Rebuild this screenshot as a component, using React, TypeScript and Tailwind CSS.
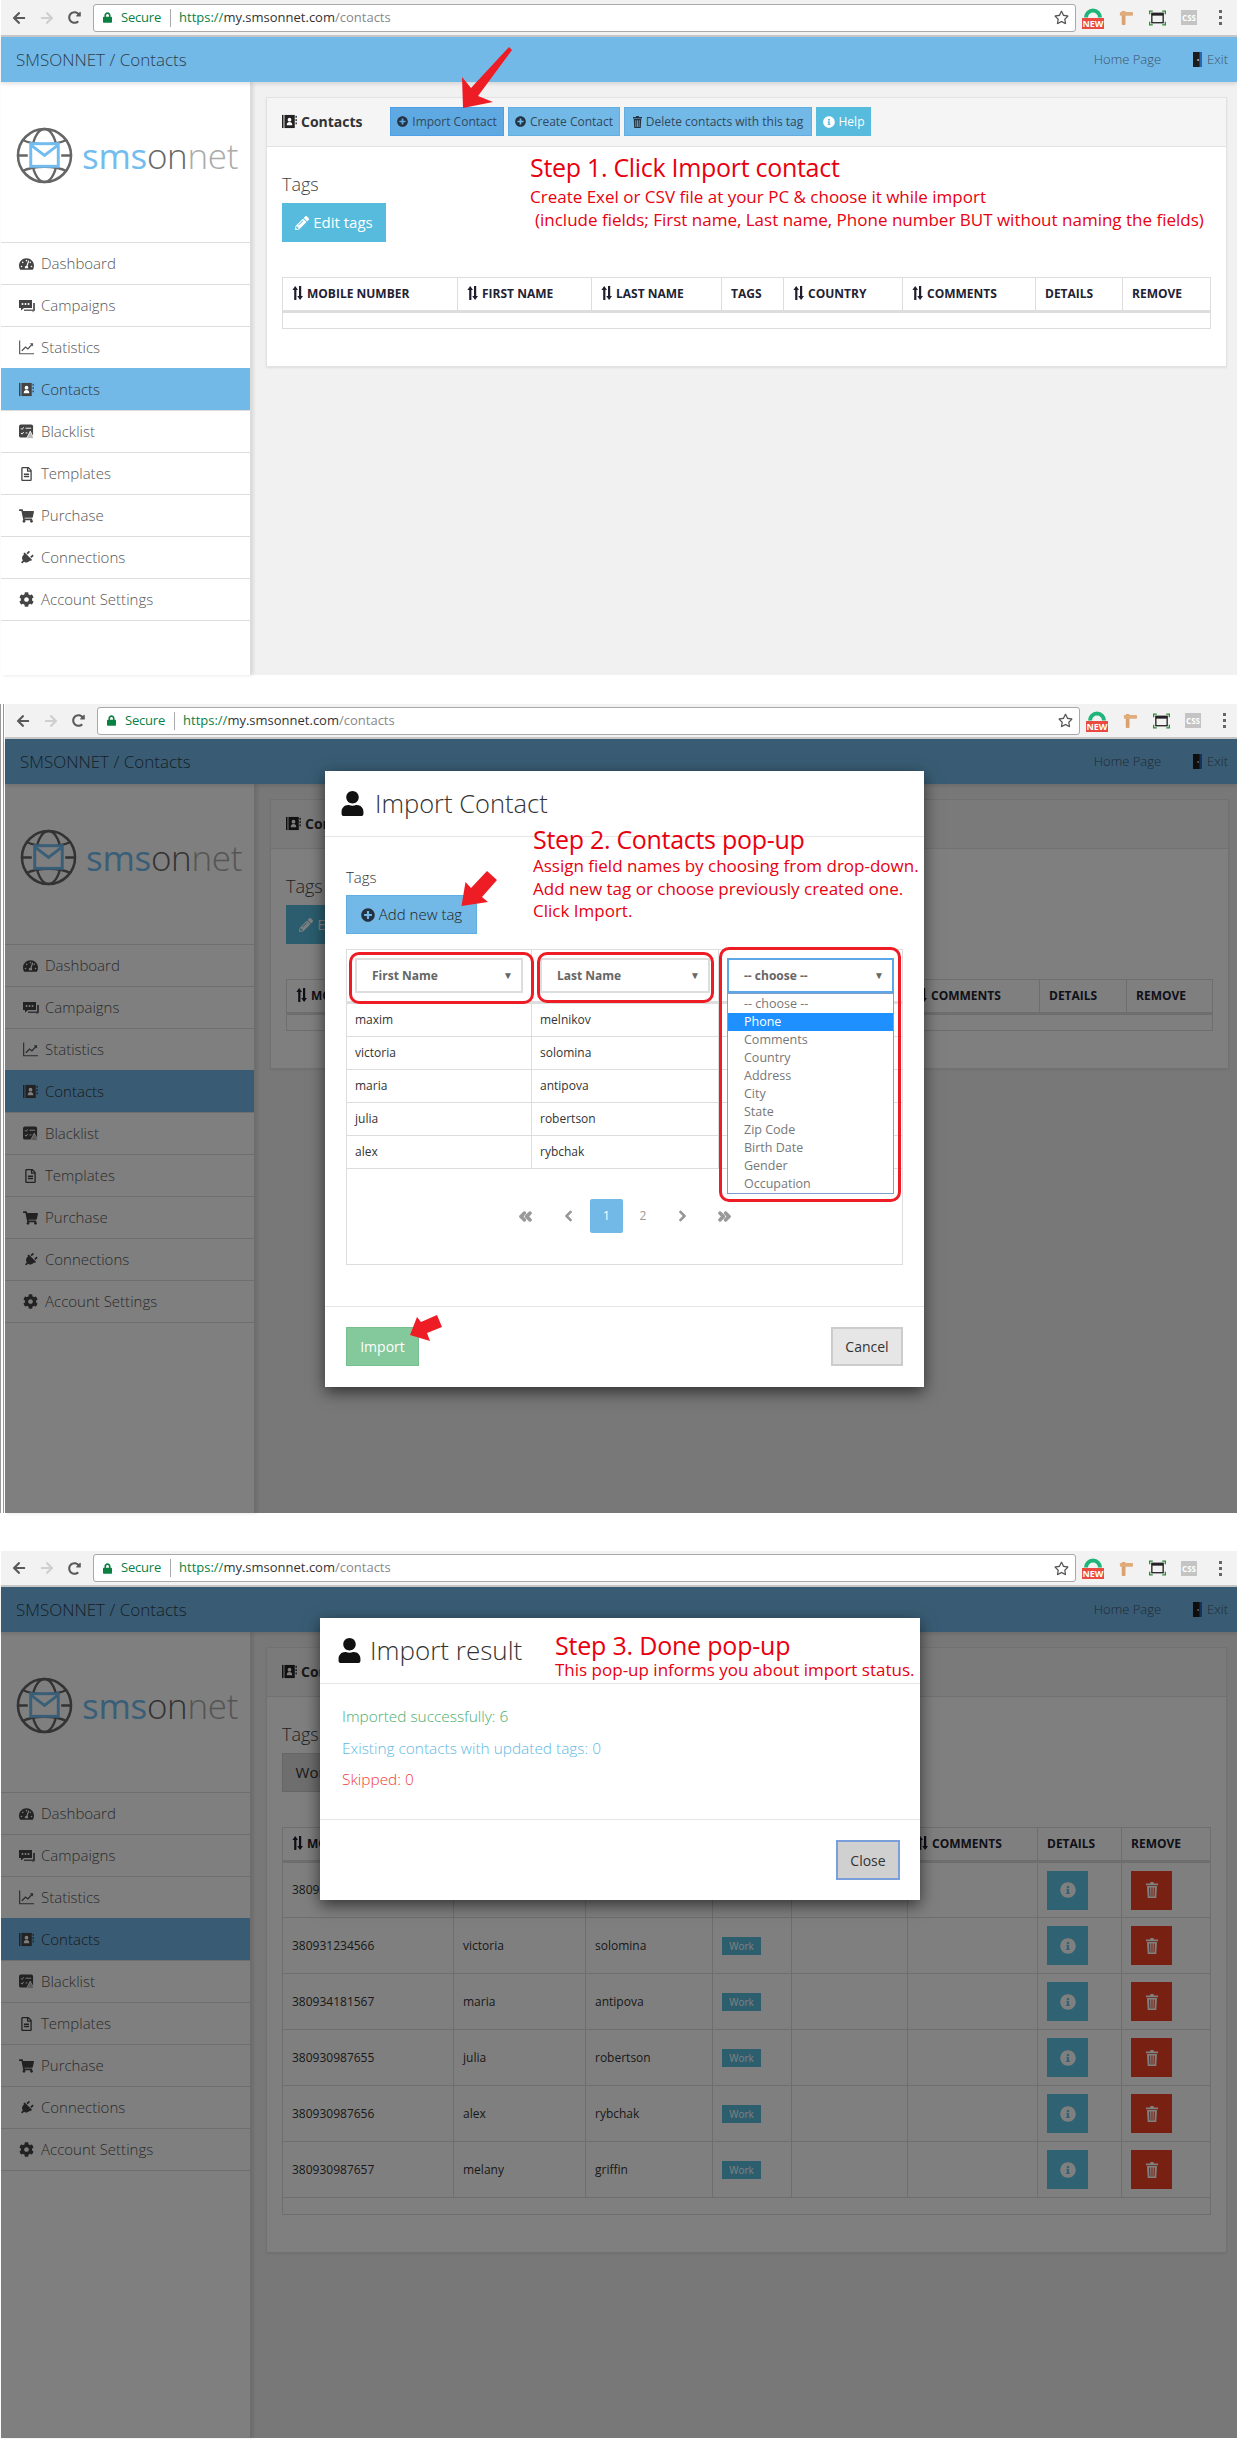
import type { ReactNode } from 'react';
import {
  FaArrowLeft, FaArrowRight, FaRedoAlt, FaLock, FaRegStar, FaPlusCircle, FaInfoCircle, FaPencilAlt,
  FaUser, FaTachometerAlt, FaRegFileAlt, FaShoppingCart, FaPlug, FaCog,
  FaAngleDoubleLeft, FaAngleDoubleRight, FaChevronLeft, FaChevronRight,
} from 'react-icons/fa';

const red = 'text-[#e8000f]';

const BookIcon = ({ className }: { className?: string }) => (
  <svg viewBox="0 0 16 16" className={className} fill="currentColor">
    <rect x="0" y="1" width="1.6" height="14" />
    <rect x="2.6" y="1" width="11" height="14" />
    <rect x="14.4" y="2" width="1.4" height="2" />
    <rect x="14.4" y="5.5" width="1.4" height="2" />
    <rect x="14.4" y="9" width="1.4" height="2" />
    <circle cx="8" cy="6" r="2" fill="#fff" />
    <path d="M5 12c0-2.4 1.2-3.4 3-3.4s3 1 3 3.4z" fill="#fff" />
  </svg>
);

const BubblesIcon = () => (
  <svg viewBox="0 0 16 14" className="w-[16px] h-[14px]" fill="#444">
    <path d="M0 1h13v8H5l-3 2.5V9H0z" />
    <path d="M14 4h2v8h-1.5v1.5L13 12H5v-1.5h9z" fill="#666" />
    <circle cx="3.5" cy="5" r="1" fill="#fff" />
    <circle cx="6.5" cy="5" r="1" fill="#fff" />
    <circle cx="9.5" cy="5" r="1" fill="#fff" />
  </svg>
);

const StatsIcon = () => (
  <svg viewBox="0 0 16 15" className="w-[15px] h-[15px]" fill="none" stroke="#555">
    <path d="M.7 0v14.2H16" strokeWidth="1.2" />
    <path d="M3 11l4-4 2.5 2L14 4" strokeWidth="1.4" />
    <path d="M11.5 3H15v3.5z" fill="#555" strokeWidth="0" />
  </svg>
);

const BlacklistIcon = () => (
  <svg viewBox="0 0 16 15" className="w-[15px] h-[15px]">
    <rect x="0" y="0" width="15" height="14" rx="2" fill="#444" />
    <path d="M2 4l1.3 1.3L5 3M7 4h6M2 9l1.3 1.3L5 8M7 9h2" stroke="#fff" strokeWidth="1" fill="none" />
    <path d="M12 7l4 8H8z" fill="#bbb" stroke="#fff" strokeWidth="0.8" />
  </svg>
);

const DoorIcon = () => (
  <svg viewBox="0 0 9 15" className="w-[9px] h-[15px] ml-[32px]">
    <rect x="0" y="0" width="9" height="15" fill="#2a66b0" />
    <path d="M0 0h6.5v15H0z" fill="#1c1c1c" />
    <rect x="4.5" y="7" width="1.2" height="2" fill="#ddd" />
  </svg>
);

const TrashIcon = ({ className }: { className: string }) => (
  <svg viewBox="0 0 12 16" className={className} fill="currentColor">
    <path d="M4.5 0h3l.6 1.4H12v1.8H0V1.4h3.9z" />
    <path d="M1 4h10l-.7 12H1.7zM3.2 5.5l.2 9h1l-.2-9zm2.3 0v9h1v-9zm2.3 0-.2 9h1l.2-9z" fillRule="evenodd" />
  </svg>
);

const SortIcon = () => (
  <svg viewBox="0 0 12 14" className="w-[12px] h-[14px] mr-[3px] inline-block align-[-2px]" fill="#1e1e2e">
    <path d="M3.2 0 6 4H4.4v10H2.2V4H.4z" />
    <path d="M7 0h2.2v10h1.8l-2.9 4-2.9-4H7z" />
  </svg>
);

const Globe = () => (
  <svg viewBox="0 0 58 58" className="w-[57px] h-[57px] shrink-0" fill="none">
    <circle cx="29" cy="29" r="27" stroke="#666" strokeWidth="2.6" />
    <ellipse cx="29" cy="29" rx="13" ry="27" stroke="#666" strokeWidth="2.4" />
    <path d="M6 13c13 6 33 6 46 0M6 45c13-6 33-6 46 0M2 29h10M46 29h10" stroke="#666" strokeWidth="2.4" />
    <rect x="15" y="17" width="28" height="23" fill="#fff" stroke="#72bcf0" strokeWidth="3" />
    <path d="M16 19l13 10 13-10" stroke="#72bcf0" strokeWidth="3" />
  </svg>
);

const BigArrow = ({ className, points, box }: { className: string; points: string; box: string }) => (
  <svg viewBox={box} className={className}>
    <polygon points={points} fill="#ee1c25" />
  </svg>
);

function BrowserBar({ className }: { className: string }) {
  return (
    <div className={`bg-[#f2f2f2] border-b-2 border-[#c8c8c8] flex items-center ${className}`}>
      <FaArrowLeft className="w-[14px] h-[14px] ml-[11px] text-[#5a5a5a]" />
      <FaArrowRight className="w-[14px] h-[14px] ml-[14px] text-[#cfcfcf]" />
      <FaRedoAlt className="w-[13px] h-[13px] ml-[14px] text-[#5a5a5a]" />
      <div className="ml-[12px] w-[983px] h-[28px] bg-white border border-[#a9a9a9] rounded-[3px] flex items-center text-[13px] pl-[9px]">
        <FaLock className="w-[9px] h-[11px] text-[#0b8043]" />
        <span className="ml-[9px] text-[#0b8043] tracking-[-0.2px]">Secure</span>
        <span className="ml-[9px] h-[18px] border-l border-[#aaa]" />
        <span className="ml-[8px]">
          <span className="text-[#0b8043]">https://</span>
          <span className="text-[#333]">my.smsonnet.com</span>
          <span className="text-[#888]">/contacts</span>
        </span>
        <FaRegStar className="ml-auto mr-[6px] w-[15px] h-[15px] text-[#555]" />
      </div>
      <div className="ml-[6px] w-[22px] h-[26px] flex flex-col items-center">
        <svg viewBox="0 0 20 12" className="w-[20px] h-[13px]">
          <path d="M1 12a9 9 0 0 1 18 0h-4a5 5 0 0 0-10 0z" fill="#1fb57a" />
        </svg>
        <span className="w-[22px] h-[11px] bg-[#ea4a3f] text-white text-[9px] leading-[11px] font-bold text-center">NEW</span>
      </div>
      <svg viewBox="0 0 16 18" className="ml-[14px] w-[15px] h-[17px]">
        <rect x="4" y="2" width="4" height="15" rx="1" fill="#d9a26f" />
        <rect x="2" y="3" width="14" height="4" rx="1" fill="#e0ac7c" />
      </svg>
      <svg viewBox="0 0 18 16" className="ml-[16px] w-[17px] h-[16px]" fill="none">
        <rect x="3" y="3" width="12" height="10" stroke="#222" strokeWidth="1.4" />
        <rect x="3" y="3" width="12" height="2.5" fill="#222" />
        <path d="M.7 4V.7H4M14 .7h3.3V4M.7 12v3.3H4M14 15.3h3.3V12" stroke="#2e8b37" strokeWidth="1.4" />
      </svg>
      <div className="ml-[15px] w-[16px] h-[15px] bg-[#c4c4c4] text-white text-[8px] leading-[15px] font-bold text-center">CSS</div>
      <div className="ml-[22px] flex flex-col gap-[3px]">
        <span className="w-[3px] h-[3px] bg-[#666]" />
        <span className="w-[3px] h-[3px] bg-[#666]" />
        <span className="w-[3px] h-[3px] bg-[#666]" />
      </div>
    </div>
  );
}

function Sidebar() {
  const items: [string, ReactNode][] = [
    ['Dashboard', <FaTachometerAlt className="w-[15px] h-[14px]" />],
    ['Campaigns', <BubblesIcon />],
    ['Statistics', <StatsIcon />],
    ['Contacts', <BookIcon className="w-[15px] h-[15px]" />],
    ['Blacklist', <BlacklistIcon />],
    ['Templates', <FaRegFileAlt className="w-[15px] h-[14px]" />],
    ['Purchase', <FaShoppingCart className="w-[15px] h-[14px]" />],
    ['Connections', <FaPlug className="w-[15px] h-[14px] rotate-45" />],
    ['Account Settings', <FaCog className="w-[15px] h-[15px]" />],
  ];
  return (
    <aside className="w-[250px] shrink-0 bg-white shadow-[2px_0_4px_rgba(0,0,0,0.12)] border-r border-[#ddd]">
      <div className="h-[160px] flex items-center pl-[15px] pb-[14px]">
        <Globe />
        <span className="ml-[9px] text-[35px] leading-none font-light tracking-[-0.3px] whitespace-nowrap">
          <span className="text-[#72bcf0] font-normal">sms</span>
          <span className="text-[#666]">on</span>
          <span className="text-[#aaa]">net</span>
        </span>
      </div>
      <nav className="border-b border-[#ddd]">
        {items.map(([label, icon]) => (
          <div
            key={label}
            className={`h-[42px] flex items-center pl-[18px] border-t font-light text-[15px] ${
              label === 'Contacts' ? 'bg-[#72b9e8] border-[#72b9e8] text-[#333]' : 'border-[#ddd] text-[#555]'
            }`}
          >
            <span className="w-[22px] text-[#444]">{icon}</span>
            {label}
          </div>
        ))}
      </nav>
    </aside>
  );
}

type Row = [string, string, string];

function ContactsTable({ cols, rows }: { cols: string[]; rows: Row[] }) {
  const heads = ['MOBILE NUMBER', 'FIRST NAME', 'LAST NAME', 'TAGS', 'COUNTRY', 'COMMENTS', 'DETAILS', 'REMOVE'];
  const sortable = ['MOBILE NUMBER', 'FIRST NAME', 'LAST NAME', 'COUNTRY', 'COMMENTS'];
  return (
    <table className="w-full table-fixed border-collapse mt-[35px]">
      <colgroup>
        {cols.map((c, i) => <col key={i} className={c} />)}
      </colgroup>
      <thead>
        <tr className="h-[34px]">
          {heads.map((h) => (
            <th key={h} className="border border-b-[3px] border-[#ddd] px-[9px] text-left text-[12px] font-bold text-[#222233] whitespace-nowrap">
              {sortable.includes(h) && <SortIcon />}
              {h}
            </th>
          ))}
        </tr>
      </thead>
      <tbody>
        {rows.map((r) => (
          <tr key={r[0]} className="h-[56px] text-[12px] text-[#333]">
            <td className="border border-[#ddd] px-[9px]">{r[0]}</td>
            <td className="border border-[#ddd] px-[9px]">{r[1]}</td>
            <td className="border border-[#ddd] px-[9px]">{r[2]}</td>
            <td className="border border-[#ddd] px-[9px]">
              <span className="block w-[39px] h-[18px] bg-[#5bbcdc] text-white text-[10px] leading-[18px] text-center">Work</span>
            </td>
            <td className="border border-[#ddd]" />
            <td className="border border-[#ddd]" />
            <td className="border border-[#ddd] px-[9px]">
              <span className="flex items-center justify-center w-[41px] h-[39px] bg-[#5fc4e4]">
                <FaInfoCircle className="w-[16px] h-[16px] text-white" />
              </span>
            </td>
            <td className="border border-[#ddd] px-[9px]">
              <span className="flex items-center justify-center w-[41px] h-[39px] bg-[#f04024]">
                <TrashIcon className="w-[12px] h-[16px] text-white" />
              </span>
            </td>
          </tr>
        ))}
        <tr className="h-[17px]">
          <td colSpan={8} className="border border-[#ddd]" />
        </tr>
      </tbody>
    </table>
  );
}

function Page({ bodyHeight, cols, rows, tagButton, marginRight }: {
  bodyHeight: string; cols: string[]; rows: Row[]; tagButton: ReactNode; marginRight: string;
}) {
  return (
    <>
      <header className="h-[45px] bg-[#72b9e8] flex items-center pl-[15px] pr-[9px] text-[#2f3f4d] font-light shadow-[0_2px_4px_rgba(0,0,0,0.12)] relative">
        <span className="text-[17px]">SMSONNET / Contacts</span>
        <span className="ml-auto text-[13px] text-[#3e5468]">Home Page</span>
        <DoorIcon />
        <span className="ml-[5px] text-[13px] text-[#3e5468]">Exit</span>
      </header>
      <div className={`flex bg-[#f1f1f1] ${bodyHeight}`}>
        <Sidebar />
        <main className={`flex-1 ml-[15px] ${marginRight}`}>
          <section className="mt-[15px] bg-white border border-[#e2e2e2] pb-[37px] shadow-[0_1px_2px_rgba(0,0,0,0.08)]">
            <div className="h-[49px] bg-[#f5f5f5] border-b border-[#e2e2e2] flex items-center pl-[15px] pb-[1px]">
              <BookIcon className="w-[15px] h-[15px] text-[#222]" />
              <span className="ml-[4px] w-[89px] text-[14px] font-bold text-[#333]">Contacts</span>
              <button className="h-[29px] w-[114px] bg-[#5fa9e3] border border-[#4d9fe8] text-[12px] text-[#33485a] flex items-center justify-center gap-[4px]">
                <FaPlusCircle className="w-[11px] h-[11px] text-[#243240]" />Import Contact
              </button>
              <button className="ml-[4px] h-[29px] w-[112px] bg-[#72b9e8] border border-[#62aee0] text-[12px] text-[#33485a] flex items-center justify-center gap-[4px]">
                <FaPlusCircle className="w-[11px] h-[11px] text-[#243240]" />Create Contact
              </button>
              <button className="ml-[4px] h-[29px] w-[188px] bg-[#72b9e8] border border-[#62aee0] text-[12px] text-[#33485a] flex items-center justify-center gap-[4px]">
                <TrashIcon className="w-[9px] h-[12px] text-[#243240]" />Delete contacts with this tag
              </button>
              <button className="ml-[4px] h-[29px] w-[55px] bg-[#57bbdd] text-[12px] text-white flex items-center justify-center gap-[4px]">
                <FaInfoCircle className="w-[12px] h-[12px]" />Help
              </button>
            </div>
            <div className="px-[15px]">
              <div className="pt-[23px] text-[18px] leading-[28px] font-light text-[#444]">Tags</div>
              <div className="mt-[5px]">{tagButton}</div>
              <ContactsTable cols={cols} rows={rows} />
            </div>
          </section>
        </main>
      </div>
    </>
  );
}

const editTags = (
  <button className="h-[39px] w-[104px] bg-[#57bbdd] text-white text-[15px] flex items-center justify-center gap-[4px]">
    <FaPencilAlt className="w-[14px] h-[14px]" />Edit tags
  </button>
);
const workTag = (
  <button className="h-[39px] w-[64px] bg-[#dcdcdc] border border-[#ccc] text-[#333] text-[15px]">Work</button>
);

function Select({ label, active }: { label: string; active?: boolean }) {
  return (
    <div className={`h-[35px] border-2 flex items-center pl-[15px] pr-[8px] text-[12px] font-bold text-[#666] ${active ? 'border-[#5ba7e8]' : 'border-[#ddd]'}`}>
      {label}
      <span className="ml-auto text-[10px]">▼</span>
    </div>
  );
}

const Ring = ({ className }: { className: string }) => (
  <div className={`absolute border-[3px] border-[#ee1c25] rounded-[10px] pointer-events-none ${className}`} />
);

function ImportModal() {
  const names = [['maxim', 'melnikov'], ['victoria', 'solomina'], ['maria', 'antipova'], ['julia', 'robertson'], ['alex', 'rybchak']];
  const options = ['-- choose --', 'Phone', 'Comments', 'Country', 'Address', 'City', 'State', 'Zip Code', 'Birth Date', 'Gender', 'Occupation'];
  return (
    <div className="absolute left-[320px] top-[32px] w-[599px] h-[616px] bg-white shadow-[0_5px_15px_rgba(0,0,0,0.6)] z-20">
      <div className="h-[66px] border-b border-[#e5e5e5] flex items-center pl-[15px]">
        <FaUser className="w-[25px] h-[25px] text-[#111]" />
        <span className="ml-[10px] text-[25.5px] font-light text-[#333]">Import Contact</span>
      </div>
      <div className="h-[470px] px-[21px] pt-[28px] border-b border-[#e5e5e5]">
        <div className="text-[15px] leading-[24px] font-light text-[#333]">Tags</div>
        <button className="mt-[6px] h-[39px] w-[131px] bg-[#72b9e8] border border-[#62aee0] text-[15px] font-light text-[#222] flex items-center justify-center gap-[4px]">
          <FaPlusCircle className="w-[14px] h-[14px] text-[#243240]" />Add new tag
        </button>
        <div className="mt-[15px] h-[316px] border border-[#ddd] relative">
          <div className="grid grid-cols-[185px_187px_1fr] h-[54px] border-b-[3px] border-[#ddd]">
            <div className="border-r border-[#ddd] pt-[8px] px-[8px]"><Select label="First Name" /></div>
            <div className="border-r border-[#ddd] pt-[8px] px-[8px]"><Select label="Last Name" /></div>
            <div className="pt-[8px] px-[8px] relative">
              <Select label="-- choose --" active />
              <div className="absolute left-[8px] right-[8px] top-[43px] z-10 bg-white border border-[#7f9dd0] text-[12.5px] text-[#777] pt-[1px]">
                {options.map((o) => (
                  <div key={o} className={`h-[18px] leading-[18px] pl-[16px] ${o === 'Phone' ? 'bg-[#1e90ff] text-white' : ''}`}>{o}</div>
                ))}
              </div>
            </div>
          </div>
          {names.map(([a, b]) => (
            <div key={a} className="grid grid-cols-[185px_187px_1fr] h-[33px] border-b border-[#ddd] text-[12px] text-[#333]">
              <div className="border-r border-[#ddd] pl-[8px] flex items-center">{a}</div>
              <div className="border-r border-[#ddd] pl-[8px] flex items-center">{b}</div>
              <div />
            </div>
          ))}
          <div className="flex items-center ml-[157px] mt-[30px] text-[#999] text-[12px]">
            <span className="w-[42px] flex justify-center"><FaAngleDoubleLeft className="w-[15px] h-[15px]" stroke="currentColor" strokeWidth={40} /></span>
            <span className="w-[44px] flex justify-center"><FaChevronLeft className="w-[11px] h-[12px]" stroke="currentColor" strokeWidth={40} /></span>
            <span className="w-[33px] h-[34px] bg-[#72b9e8] rounded-[2px] text-white flex items-center justify-center">1</span>
            <span className="w-[40px] text-center">2</span>
            <span className="w-[38px] flex justify-center"><FaChevronRight className="w-[11px] h-[12px]" stroke="currentColor" strokeWidth={40} /></span>
            <span className="w-[46px] flex justify-center"><FaAngleDoubleRight className="w-[15px] h-[15px]" stroke="currentColor" strokeWidth={40} /></span>
          </div>
          <Ring className="left-[2px] top-[2px] w-[185px] h-[52px]" />
          <Ring className="left-[190px] top-[2px] w-[177px] h-[51px]" />
          <Ring className="left-[372px] top-[-3px] w-[182px] h-[255px] z-20" />
        </div>
      </div>
      <div className="flex justify-between px-[21px] pt-[20px]">
        <button className="h-[39px] w-[73px] bg-[#84c99b] border border-[#78bf90] text-white text-[14px]">Import</button>
        <button className="h-[39px] w-[72px] bg-[#e6e6e6] border-2 border-[#ccc] text-[#333] text-[14px]">Cancel</button>
      </div>
      <div className={`absolute left-[208px] top-[53px] z-30 ${red}`}>
        <div className="text-[25px] leading-[30px] tracking-[-0.3px] whitespace-nowrap">Step 2. Contacts pop-up</div>
        <div className="text-[17px] leading-[22.7px] mt-[1px] whitespace-nowrap">
          Assign field names by choosing from drop-down.<br />Add new tag or choose previously created one.<br />Click Import.
        </div>
      </div>
      <BigArrow className="absolute left-[135px] top-[99px] w-[38px] h-[37px] z-30" box="0 0 38 37" points="27,1 37,10 22,27 28,32 1.5,36 5.5,12 11,18" />
      <BigArrow className="absolute left-[83px] top-[542px] w-[35px] h-[29px] z-30" box="0 0 35 29" points="2,22 9,4 13,9 29,2 34,14 19,20 22,28" />
    </div>
  );
}

function ResultModal() {
  return (
    <div className="absolute left-[319px] top-[31px] w-[600px] h-[282px] bg-white shadow-[0_5px_15px_rgba(0,0,0,0.6)] z-20">
      <div className="h-[66px] border-b border-[#e5e5e5] flex items-center pl-[17px]">
        <FaUser className="w-[25px] h-[25px] text-[#111]" />
        <span className="ml-[8px] text-[26px] font-light text-[#333]">Import result</span>
      </div>
      <div className="h-[136px] border-b border-[#e5e5e5] pl-[22px] pt-[17px] text-[15.4px] font-light leading-[31.5px]">
        <div className="text-[#4cae6c]">Imported successfully: 6</div>
        <div className="text-[#62b9e4]">Existing contacts with updated tags: 0</div>
        <div className="text-[#ee3b3b]">Skipped: 0</div>
      </div>
      <div className="flex justify-end pr-[20px] pt-[20px]">
        <button className="h-[40px] w-[64px] bg-[#d0d0d0] border-2 border-[#7aa0dc] text-[#333] text-[14px]">Close</button>
      </div>
      <div className={`absolute left-[235px] top-[12px] ${red}`}>
        <div className="text-[25px] leading-[30px] tracking-[-0.2px] whitespace-nowrap">Step 3. Done pop-up</div>
        <div className="text-[17px] leading-[22px] mt-[-1px] whitespace-nowrap">This pop-up informs you about import status.</div>
      </div>
    </div>
  );
}

export default function App() {
  const colsA = ['w-[175px]', 'w-[134px]', 'w-[130px]', 'w-[62px]', 'w-[119px]', 'w-[133px]', 'w-[87px]', ''];
  const colsC = ['w-[171px]', 'w-[132px]', 'w-[127px]', 'w-[79px]', 'w-[116px]', 'w-[130px]', 'w-[84px]', ''];
  const rows: Row[] = [
    ['380931234565', 'maxim', 'melnikov'],
    ['380931234566', 'victoria', 'solomina'],
    ['380934181567', 'maria', 'antipova'],
    ['380930987655', 'julia', 'robertson'],
    ['380930987656', 'alex', 'rybchak'],
    ['380930987657', 'melany', 'griffin'],
  ];
  return (
    <div className="w-[1237px] h-[2439px] overflow-hidden bg-white font-['Open_Sans',sans-serif]">
      {/* step 1 */}
      <div className="pl-[1px]">
        <BrowserBar className="h-[37px]" />
        <div className="relative">
          <Page bodyHeight="h-[593px]" cols={colsA} rows={[]} tagButton={editTags} marginRight="mr-[10px]" />
          <div className={`absolute left-[529px] top-[112px] ${red}`}>
            <div className="text-[25px] leading-[36px] tracking-[-0.3px] whitespace-nowrap">Step 1. Click Import contact</div>
            <div className="text-[17px] leading-[23px] whitespace-nowrap">Create Exel or CSV file at your PC &amp; choose it while import</div>
            <div className="text-[17px] leading-[23px] whitespace-nowrap pl-[5px]">(include fields; First name, Last name, Phone number BUT without naming the fields)</div>
          </div>
          <BigArrow className="absolute left-[459px] top-[8px] w-[53px] h-[64px]" box="0 0 53 64" points="49,2 52,5 18,51 33,57 3,63 2,32 11,43" />
        </div>
      </div>

      {/* step 2 */}
      <div className="mt-[29px] pl-[1px] border-l-[4px] border-double border-[#999]">
        <BrowserBar className="h-[35px]" />
        <div className="relative">
          <Page bodyHeight="h-[729px]" cols={colsA} rows={[]} tagButton={editTags} marginRight="mr-[8px]" />
          <div className="absolute inset-0 bg-black/50 z-10" />
          <ImportModal />
        </div>
      </div>

      {/* step 3 */}
      <div className="mt-[38px] pl-[1px]">
        <BrowserBar className="h-[36px]" />
        <div className="relative">
          <Page bodyHeight="h-[806px]" cols={colsC} rows={rows} tagButton={workTag} marginRight="mr-[10px]" />
          <div className="absolute inset-0 bg-black/50 z-10" />
          <ResultModal />
        </div>
      </div>
    </div>
  );
}
